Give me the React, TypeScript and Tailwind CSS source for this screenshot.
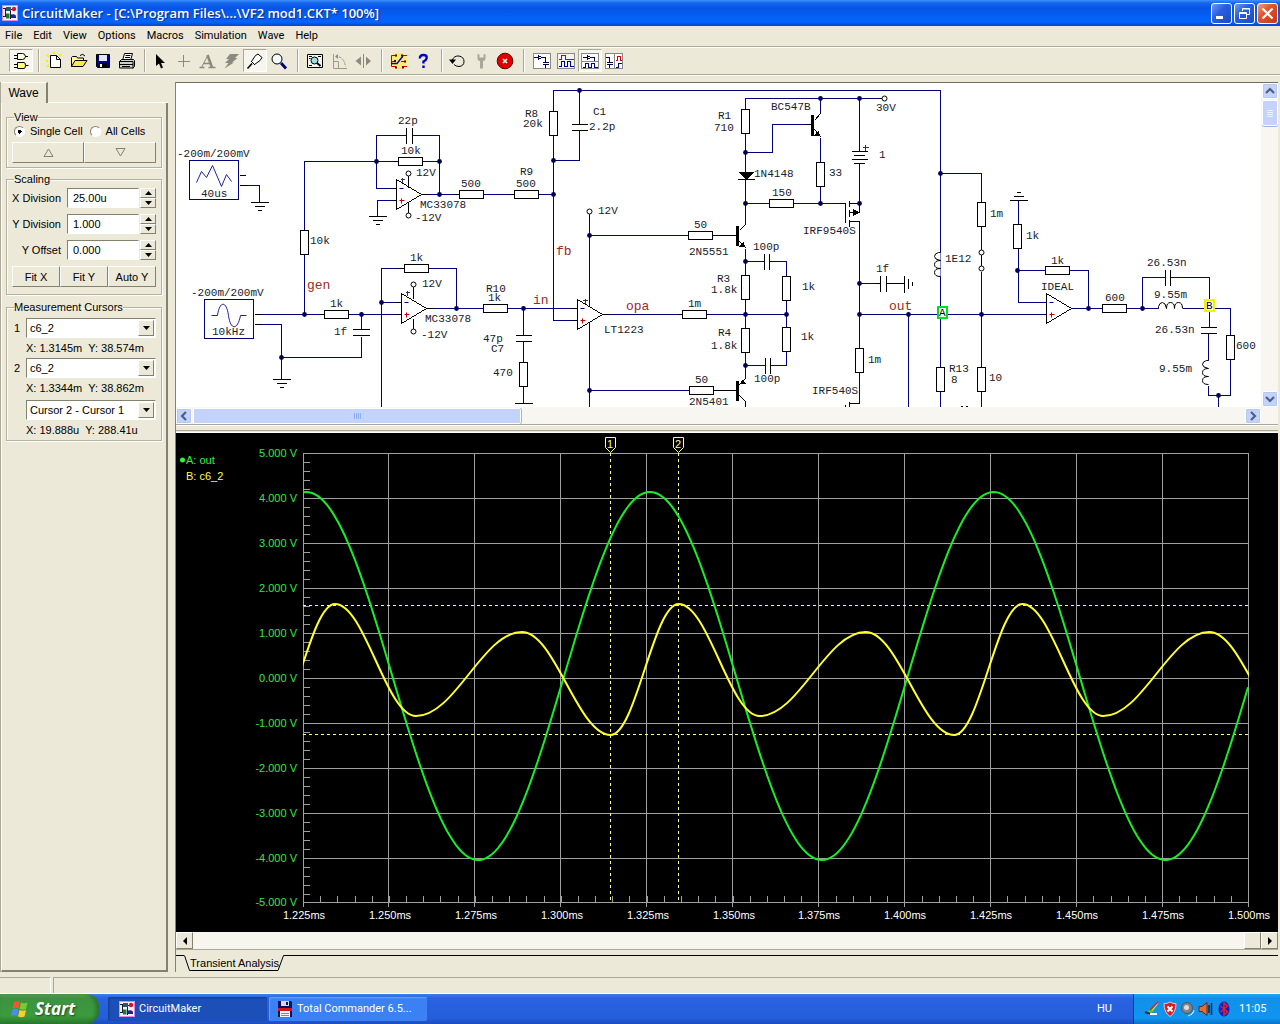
import React, { useState } from "react";
import { clsx } from "clsx";

/* ---------- shared styles ---------- */

const RAISED = "border border-t-white border-l-white border-r-[#85816f] border-b-[#85816f] bg-[#ece9d8]";
const SUNKEN = "border border-t-[#85816f] border-l-[#85816f] border-r-white border-b-white bg-white";

/* ---------- toolbar icons ---------- */

function Icon({ children, crisp }: { children: React.ReactNode; crisp?: boolean }) {
  return (
    <svg width="18" height="18" viewBox="0 0 18 18" fill="none" stroke="#000" strokeWidth="1" shapeRendering={crisp ? "crispEdges" : undefined} aria-hidden="true">
      {children}
    </svg>
  );
}

const icons: Record<string, React.ReactNode> = {
  gates: (
    <Icon>
      <path d="M5.500 1.500h5q2.500 0 3 3q-.5 3-3 3h-5zM2 3.500h3.500M2 6.500h3.500M13 4.500h3" fill="#ffffd8" />
      <path d="M5.500 10.500h6.500q1.500 0 1.500 3t-1.500 3H5.500zM2 12.500h3.500M2 15.500h3.500M13.500 13.500h3" fill="#ffff80" />
    </Icon>
  ),
  new: (
    <Icon>
      <path d="M1 3l2 2M8 0v2M15 2l-2 2M1 15l2-2M0 9h2" stroke="#f4f000" strokeWidth="2" />
      <path d="M4.500 3.500h6l4 4v8h-10z" fill="#fff" />
      <path d="M10.500 3.500v4h4" />
    </Icon>
  ),
  open: (
    <Icon>
      <path d="M1.500 14.500v-9l1-1h4l1 1.500h6v3" fill="#ffff90" />
      <path d="M1.500 14.500l3.500-6h12l-4 6z" fill="#f4e858" />
      <path d="M10 3.500q3-2.500 5 .5" />
    </Icon>
  ),
  save: (
    <Icon>
      <path d="M2.500 2.500h13v13h-12l-1-1z" fill="#000080" />
      <rect x="5" y="3" width="8" height="6" fill="#e6e6f2" stroke="none" />
      <rect x="5" y="11" width="8" height="4" fill="#000" stroke="none" />
      <rect x="6" y="12" width="2" height="3" fill="#fff" stroke="none" />
    </Icon>
  ),
  print: (
    <Icon>
      <path d="M4.500 8.500l2-7h8l-2 7" fill="#fff" />
      <path d="M7.500 3.500h5M7 5.500h5" />
      <path d="M1.500 9.500l2-2h12l1 1v6l-1.500 1.500h-13.500z" fill="#d0d0c8" />
      <path d="M1.500 9.500h13.500M1.500 12.500h13.500M15 9.500v7M4 14.500h8" />
    </Icon>
  ),
  arrow: (
    <Icon>
      <path d="M6 2v12l3-2.500 2 5 2-1-2-4.500h4z" fill="#000" stroke="none" />
    </Icon>
  ),
  plus: (
    <Icon crisp>
      <path d="M9.500 3v12M4 9.500h12" stroke="#8c8a80" />
    </Icon>
  ),
  text: (
    <Icon>
      <path d="M3.500 15.500L10 3" stroke="#8c8a80" />
      <path d="M9.500 3l4.500 12.500" stroke="#8c8a80" strokeWidth="2.600" />
      <path d="M5.500 11.500h6.500M1.500 15.500h5M10.500 15.500h7" stroke="#8c8a80" strokeWidth="1.400" />
    </Icon>
  ),
  bolt: (
    <Icon>
      <path d="M8 2h9l-4 4h2.500l-5.500 4.500h2L2.500 16.500l4-5.500H3l4-4H4z" fill="#8c8a80" stroke="none" />
    </Icon>
  ),
  probe: (
    <Icon>
      <path d="M1.500 16.500l4.500-5" strokeWidth="1.600" />
      <path d="M5.500 9.500l4-6 2.500-1.500 4 3.500-2 3-5.500 4z" fill="#fff" />
      <path d="M5 9l4 4" />
    </Icon>
  ),
  zoom: (
    <Icon>
      <circle cx="7" cy="7" r="5" fill="#f4fbfb" />
      <path d="M11 11l5 5.500" stroke="#000080" strokeWidth="2.800" />
    </Icon>
  ),
  preview: (
    <Icon>
      <path d="M1.500 2.500h15v13h-15z" fill="#f4f4ec" />
      <path d="M3 4.500h3M3 6.500h1.500M3 13.500h3M12 4.500h3" />
      <circle cx="8.500" cy="8.500" r="3.500" fill="#9be0e0" />
      <path d="M11 11l3.500 3" strokeWidth="2" />
    </Icon>
  ),
  rotate: (
    <Icon>
      <path d="M3.500 2v14.500H17M3.500 9.500h5v7" stroke="#9c9a8c" />
      <path d="M6 4.500q8 0 9.500 10" stroke="#8c8a80" strokeDasharray="2 1" />
      <path d="M8 2L5 4.500 8 7z" fill="#8c8a80" stroke="none" />
    </Icon>
  ),
  mirror: (
    <Icon>
      <path d="M9.500 2v14" stroke="#8c8a80" />
      <path d="M7 4.500v9L1.500 9zM12 4.500v9l5-4.500z" fill="#8c8a80" stroke="none" />
    </Icon>
  ),
  traces: (
    <Icon>
      <circle cx="9" cy="9" r="8.500" fill="#ffee30" opacity=".6" stroke="none" />
      <path d="M6 3.500H1.500v11H6M1.500 9.500H5M12 3.500h5M11 9.500h5M12 14.500h5" stroke="#c80000" />
      <path d="M1 11.500h6L13 4" stroke="#0000c0" strokeWidth="1.400" />
      <path d="M5 3.500h2M11 3.500h2M14 9.500h2M5 15.500h2M12 15.500h2M4 9h2" stroke="#400000" strokeWidth="2" />
    </Icon>
  ),
  help: (
    <Icon>
      <path d="M6 6.500q-.5-3.500 3.500-3.500t3 3.500Q12 8.500 9.500 9.500V11.500M9.500 13.500v2.500" stroke="#0000c8" strokeWidth="2.400" />
    </Icon>
  ),
  undo: (
    <Icon>
      <path d="M4 8.500Q6 3.500 11 4q5 1 5 5.500t-5 5Q8 14.500 6 12.500" />
      <path d="M1 7.500h7L4.500 12z" fill="#000" stroke="none" />
    </Icon>
  ),
  wrench: (
    <Icon>
      <path d="M5.500 2v4q0 3 2.500 3v7.500h3V9q2.500 0 2.500-3V2l-2 .5v3h-4v-3z" fill="#a9a79a" stroke="none" />
    </Icon>
  ),
  stop: (
    <Icon>
      <circle cx="9" cy="9" r="7.800" fill="#e00000" stroke="#600000" strokeWidth="1" />
      <path d="M7 7l4 4M11 7l-4 4" stroke="#fff" strokeWidth="1.600" />
    </Icon>
  ),
  schem: (
    <Icon crisp>
      <path d="M.5 1.500h17v15H.5z" fill="#fff" stroke="#888" />
      <path d="M1 5.500h4M5.500 3v5M6 4.500h2M6 6.500h2M8 5.500h4.500v5M10 10.500h6M10 12.500h6M12.500 13v3" stroke="#000050" />
    </Icon>
  ),
  waves: (
    <Icon crisp>
      <path d="M.5 1.500h17v15H.5z" fill="#f2f2ee" stroke="#888" />
      <path d="M2 7.500h2.500V3.500h4v4h8" stroke="#d00000" />
      <path d="M2 14.500h2.500v-5h3v5h3v-5h3v5h3" stroke="#0000a0" />
    </Icon>
  ),
  split: (
    <Icon crisp>
      <path d="M.5 1.500h17v15H.5zM.5 9.500h17" fill="#fff" stroke="#888" />
      <path d="M2 5.500h4M6.500 3v5M7 4.500h2M7 6.500h2M9 5.500h4.500v3" stroke="#000050" />
      <path d="M2 15.500h2.500v-4h3v4h3v-4h3v4h3" stroke="#0000a0" />
    </Icon>
  ),
  vsplit: (
    <Icon crisp>
      <path d="M.5 1.500h17v15H.5zM9.500 1.500v15" fill="#fff" stroke="#888" />
      <path d="M1 5.500h3.500v5M2 10.500h6M2 12.500h6M4.500 13v3" stroke="#000050" />
      <path d="M11 8.500h1.500V4.500h3v4H17" stroke="#d00000" />
      <path d="M11 15.500h2.500v-4h3" stroke="#0000a0" />
    </Icon>
  ),
};

type Tool = { id: string; label: string; pressed?: boolean };

const toolGroups: { cls: string; tools: Tool[] }[] = [
  { cls: "ml-[9px] mr-[5px]", tools: [{ id: "gates", label: "Parts browser", pressed: true }] },
  {
    cls: "ml-[3px] mr-[5px]",
    tools: [
      { id: "new", label: "New" },
      { id: "open", label: "Open" },
      { id: "save", label: "Save" },
      { id: "print", label: "Print" },
    ],
  },
  {
    cls: "ml-px mr-1.5",
    tools: [
      { id: "arrow", label: "Arrow tool" },
      { id: "plus", label: "Wire tool" },
      { id: "text", label: "Text tool" },
      { id: "bolt", label: "Delete tool" },
      { id: "probe", label: "Probe tool", pressed: true },
      { id: "zoom", label: "Zoom tool" },
    ],
  },
  {
    cls: "ml-1 mr-1.5",
    tools: [
      { id: "preview", label: "Zoom to fit" },
      { id: "rotate", label: "Rotate" },
      { id: "mirror", label: "Mirror" },
    ],
  },
  {
    cls: "ml-1 mr-1.5",
    tools: [
      { id: "traces", label: "Digital options" },
      { id: "help", label: "Help" },
    ],
  },
  {
    cls: "ml-0.5 mr-1.5",
    tools: [
      { id: "undo", label: "Reset" },
      { id: "wrench", label: "Step" },
      { id: "stop", label: "Stop simulation" },
    ],
  },
  {
    cls: "ml-[5px]",
    tools: [
      { id: "schem", label: "Schematic only" },
      { id: "waves", label: "Waveforms only" },
      { id: "split", label: "Split horizontally", pressed: true },
      { id: "vsplit", label: "Split vertically" },
    ],
  },
];

function Toolbar() {
  return (
    <div role="toolbar" className="flex h-7 items-center border-t border-[#aca899] shadow-[inset_0_1px_0_#fff,0_1px_0_#aca899,0_2px_0_#fff]">
      {toolGroups.map((g, i) => (
        <React.Fragment key={i}>
          {i > 0 && <div className="h-[23px] w-0.5 border-l border-r border-l-[#aca899] border-r-white" />}
          <div className={clsx("flex", g.cls)}>
            {g.tools.map((t) => (
              <button
                key={t.id}
                aria-label={t.label}
                className={clsx(
                  "flex h-[23px] w-6 items-center justify-center",
                  t.pressed && "border border-t-[#aca899] border-l-[#aca899] border-r-white border-b-white bg-[#f6f5ee]"
                )}
              >
                {icons[t.id]}
              </button>
            ))}
          </div>
        </React.Fragment>
      ))}
    </div>
  );
}

/* ---------- title bar and menu ---------- */

function AppLogo() {
  return (
    <svg width="16" height="16" viewBox="0 0 16 16" aria-hidden="true" className="shrink-0">
      <rect width="16" height="16" fill="#f8eef8" />
      <rect x=".5" y=".5" width="15" height="15" fill="none" stroke="#e088e0" />
      <path d="M1 3.500h4M1 11.500h3M3.500 3v9M9 4.500h4M9 12.500h5" stroke="#102030" />
      <rect x="4" y="2" width="5" height="4" fill="#285a68" />
      <circle cx="12" cy="4" r="2.200" fill="#d81030" />
      <path d="M4 8.500h3.500v5H4z" fill="#108030" />
      <path d="M9 9.500q4.500-1 5 1.500 0 2.500-5 2z" fill="#182890" />
      <path d="M8.500 6v8" stroke="#102030" />
    </svg>
  );
}

function TitleBar() {
  const btn = "flex h-[21px] w-[21px] items-center justify-center rounded-[3px] border border-white";
  return (
    <header className="flex h-[26px] items-center bg-[linear-gradient(#3c92fb_0,#1765ef_3px,#0455e4_8px,#0560f6_17px,#0464fc_22px,#0345cd_26px)] pr-0.5 pl-0.5">
      <AppLogo />
      <h1 className="ml-1 flex-1 truncate font-['Open_Sans','Noto_Sans',sans-serif] text-[13px] leading-4 font-semibold text-white [text-shadow:1px_1px_1px_#0a2a80]">
        CircuitMaker - [C:\Program Files\...\VF2 mod1.CKT* 100%]
      </h1>
      <div className="flex gap-0.5">
        <button aria-label="Minimize" className={clsx(btn, "bg-[linear-gradient(135deg,#6f9bf5,#2a5fe0_40%,#1c49c8)]")}>
          <svg width="15" height="15" viewBox="0 0 15 15"><path d="M2 10h7v3H2z" fill="#fff" /></svg>
        </button>
        <button aria-label="Restore" className={clsx(btn, "bg-[linear-gradient(135deg,#6f9bf5,#2a5fe0_40%,#1c49c8)]")}>
          <svg width="15" height="15" viewBox="0 0 15 15" fill="none" stroke="#fff">
            <path d="M5.500 5V2.500h7v6H10M5 3h8" /><path d="M2.500 6.500h7v6h-7zM2 7.500h8" />
          </svg>
        </button>
        <button aria-label="Close" className={clsx(btn, "bg-[linear-gradient(135deg,#f0a080,#e0542c_40%,#c43a14)]")}>
          <svg width="15" height="15" viewBox="0 0 15 15"><path d="M2.500 2.500l10 10M12.500 2.500l-10 10" stroke="#fff" strokeWidth="2.200" /></svg>
        </button>
      </div>
    </header>
  );
}

function MenuBar() {
  const items = ["File", "Edit", "View", "Options", "Macros", "Simulation", "Wave", "Help"];
  return (
    <nav className="flex h-5 items-center gap-[11px] pl-[5px] font-['Roboto',sans-serif] text-[11px] leading-4 text-black">
      {items.map((m) => (
        <button key={m}>{m}</button>
      ))}
    </nav>
  );
}

/* ---------- side panel ---------- */

function Group({ title, children, className }: { title: string; children: React.ReactNode; className?: string }) {
  return (
    <fieldset className={clsx("mx-1 min-w-0 border border-[#b5b19f] px-[5px] shadow-[inset_1px_1px_0_#fff,1px_1px_0_#fff]", className)}>
      <legend className="ml-0.5 h-3 leading-3">{title}</legend>
      {children}
    </fieldset>
  );
}

function ScaleField({ label, id, initial }: { label: string; id: string; initial: string }) {
  const [value, setValue] = useState(initial);
  const spin = clsx(RAISED, "flex h-2.5 w-full items-center justify-center");
  return (
    <div className="flex h-5 items-center">
      <label htmlFor={id} className="w-[55px] pr-1.5 text-right whitespace-nowrap">{label}</label>
      <input id={id} value={value} onChange={(e) => setValue(e.target.value)} className={clsx(SUNKEN, "h-5 w-[72px] min-w-0 px-[5px] outline-none")} />
      <div className="ml-px flex h-5 w-4 flex-col">
        <button aria-label={label + " up"} className={spin}>
          <svg width="7" height="4"><path d="M0 4L3.500 0 7 4z" /></svg>
        </button>
        <button aria-label={label + " down"} className={spin}>
          <svg width="7" height="4"><path d="M0 0L3.500 4 7 0z" /></svg>
        </button>
      </div>
    </div>
  );
}

function Combo({ label, id, options }: { label?: string; id: string; options: string[] }) {
  return (
    <div className="flex h-5 items-center">
      {label ? <label htmlFor={id} className="w-3.5 pl-0.5">{label}</label> : <span className="w-3.5" />}
      <div className="relative h-5 flex-1">
        <select id={id} aria-label={label ? undefined : "Difference"} className={clsx(SUNKEN, "h-5 w-full appearance-none pl-[3px] outline-none")}>
          {options.map((o) => (
            <option key={o}>{o}</option>
          ))}
        </select>
        <span className={clsx(RAISED, "pointer-events-none absolute top-0.5 right-0.5 flex h-4 w-4 items-center justify-center")}>
          <svg width="7" height="4"><path d="M0 0L3.500 4 7 0z" /></svg>
        </span>
      </div>
    </div>
  );
}

function SidePanel() {
  const push = clsx(RAISED, "h-[21px] flex-1");
  const radio = "h-[11px] w-[11px] appearance-none rounded-full border border-[#85816f] border-r-white border-b-white bg-white checked:bg-[radial-gradient(#000_0_2px,#fff_2px)]";
  return (
    <aside className="mt-2 flex w-[168px] shrink-0 flex-col border-l border-[#aca899] font-['Liberation_Sans',Arial,sans-serif] text-[11px] leading-[14px] text-black">
      <div role="tablist" className="flex h-[21px]">
        <button role="tab" aria-selected="true" className="w-[47px] border-t border-r-2 border-t-white border-r-[#85816f] text-[12px]">Wave</button>
        <div className="flex-1 border-b border-white" />
      </div>
      <div className="flex flex-1 flex-col border-r-2 border-b-2 border-l border-r-[#85816f] border-b-[#85816f] border-l-white pt-2">
        <Group title="View" className="h-[57px]">
          <div className="flex h-4 items-center">
            <label className="flex items-center gap-[5px] pl-0.5 whitespace-nowrap">
              <input type="radio" name="cells" defaultChecked className={radio} />
              Single Cell
            </label>
            <label className="ml-[7px] flex items-center gap-[5px] whitespace-nowrap">
              <input type="radio" name="cells" className={radio} />
              All Cells
            </label>
          </div>
          <div className="mt-[3px] flex">
            <button aria-label="Previous cell" className={clsx(push, "flex items-center justify-center")}>
              <svg width="11" height="9" fill="none" stroke="#85816f"><path d="M1 8.500L5.500 1 10 8.500z" /></svg>
            </button>
            <button aria-label="Next cell" className={clsx(push, "flex items-center justify-center")}>
              <svg width="11" height="9" fill="none" stroke="#85816f"><path d="M1 .5L5.500 8 10 .5z" /></svg>
            </button>
          </div>
        </Group>
        <Group title="Scaling" className="mt-[5px] h-[122px]">
          <div className="mt-[3px] flex flex-col gap-1.5">
            <ScaleField id="xdiv" label="X Division" initial="25.00u" />
            <ScaleField id="ydiv" label="Y Division" initial="1.000" />
            <ScaleField id="yoff" label="Y Offset" initial="0.000" />
          </div>
          <div className="mt-1.5 flex">
            <button className={push}>Fit X</button>
            <button className={push}>Fit Y</button>
            <button className={push}>Auto Y</button>
          </div>
        </Group>
        <Group title="Measurement Cursors" className="mt-1.5 h-[140px]">
          <div className="mt-[5px]">
            <Combo id="cur1" label="1" options={["c6_2", "out"]} />
            <p className="h-5 pl-3.5 leading-5 whitespace-pre">X: 1.3145m  Y: 38.574m</p>
            <Combo id="cur2" label="2" options={["c6_2", "out"]} />
            <p className="h-[22px] pl-3.5 leading-5 whitespace-pre">X: 1.3344m  Y: 38.862m</p>
            <Combo id="curd" options={["Cursor 2 - Cursor 1"]} />
            <p className="h-5 pl-3.5 leading-5 whitespace-pre">X: 19.888u  Y: 288.41u</p>
          </div>
        </Group>
      </div>
    </aside>
  );
}

/* ---------- schematic ---------- */

const wires = [
  "M246 185H259V202",
  "M304 314V161H398M422 161H439M376 188V135H406M412 135H439V194M376 188H390M390 200H377V216",
  "M421 194H459M483 194H514M538 194H553",
  "M260 314H324M348 314H401M261 324H281V379M281 357H361V336M361 314V329",
  "M381 407V268H404M428 268H456V308M381 302H401M426 308H483M507 308H571M523 308V335M523 341V403",
  "M571 320H553V90H940V407M579 90V124M579 130V160H553",
  "M589 214V306M589 235H688M589 322V407M589 390H689M602 314H786",
  "M745 203V98H878M745 152H772V124H805M820 98V112M820 137V203M859 98V151M859 163V203",
  "M745 203V224M745 203H840M745 248V377M745 261H764M769 261H786V365H770M745 365H765",
  "M859 221V403M859 283H874M859 314H1046M908 314V407",
  "M940 173H981V249M981 271V407M1018 200V302H1046M1017 270H1088V308M1071 308H1158M1182 308H1230V395H1208V385M1218 395V407",
  "M1142 308V277H1165M1170 277H1209V327M1208 333V360",
];

const leads = [
  "M239 175h6M239 185h7M254 314h6M254 324h7M390 188h6M390 200h6M395 314h6M395 302h6M393 161h5M453 194h5M508 194h5M318 314h5M397 268h6M421 194h6M426 308h6M571 308h6M571 320h6M602 314h6M676 314h5",
  "M250 202h18M254 206h10M257 210h4M368 216h18M372 220h10M375 224h4M272 379h18M276 383h10M279 387h4M514 403h18",
  "M1009 200h18M1013 196h10M1016 192h4M904 275v17M908 278v10M912 281v4",
  "M406 127v16M412 127v16M352 329h17M352 335h17M515 335h16M515 341h16M571 124h16M571 130h16M764 253v16M769 253v16M765 357v16M770 357v16M880 275v16M886 275v16M886 283h18M874 283h6M1165 269v16M1170 269v16M1200 327h16M1200 333h16",
  "M851 151h16M853 155h11M851 159h16M853 163h11M859 147v4M878 98h4",
  "M712 235h24M713 390h23M805 124h6M739 230L745 224M739 241L745 247M814 120L820 113M814 129L820 136M739 384L745 378M739 395L745 401V407",
  "M737 179h17M838 203h7v19M849 200v6M849 209v7M849 219v7M849 203h10v9h-10M849 221h10M849 401v6M849 403h10M845 404v3",
  "M408 175v12M408 201v12M413 286v12M413 318v11M589 213v5M981 254v12",
  "M396 179V209L421 194ZM401 293V323L426 308ZM577 299V329L602 314ZM1046 293V323L1071 308Z",
  "M960 406h2M965 406h2",
];

const hRes = [[410, 161], [471, 194], [526, 194], [336, 314], [416, 268], [495, 308], [700, 235], [701, 390], [694, 314], [781, 203], [1057, 270], [1114, 308]];
const vRes = [[304, 242], [553, 123], [523, 374], [745, 121], [820, 174], [745, 287], [786, 288], [786, 339], [745, 340], [859, 360], [940, 379], [981, 214], [981, 379], [1017, 236], [1230, 347]];
const dots = [[376, 161], [439, 161], [439, 194], [304, 314], [361, 314], [281, 357], [381, 302], [456, 308], [523, 308], [553, 160], [553, 194], [579, 90], [589, 235], [589, 390], [745, 152], [745, 203], [745, 261], [745, 314], [745, 365], [786, 314], [820, 98], [820, 203], [859, 98], [859, 203], [859, 283], [859, 314], [908, 314], [940, 173], [981, 314], [1017, 270], [1088, 308], [1142, 308], [1218, 395]];
const pins = [[408, 173], [408, 215], [413, 284], [413, 331], [589, 211], [884, 98], [981, 252], [981, 268]];

const labels: [number, number, string][] = [
  [177, 157, "-200m/200mV"], [201, 197, "40us"], [398, 124, "22p"], [401, 154, "10k"], [416, 176, "12V"], [420, 208, "MC33078"], [415, 221, "-12V"],
  [310, 244, "10k"], [191, 296, "-200m/200mV"], [212, 335, "10kHz"], [330, 307, "1k"], [334, 335, "1f"], [410, 261, "1k"], [422, 287, "12V"],
  [425, 322, "MC33078"], [421, 338, "-12V"], [461, 187, "500"], [520, 175, "R9"], [516, 187, "500"], [486, 292, "R10"], [488, 301, "1k"],
  [483, 342, "47p"], [491, 352, "C7"], [493, 376, "470"], [525, 117, "R8"], [523, 127, "20k"], [593, 115, "C1"], [589, 130, "2.2p"], [598, 214, "12V"],
  [604, 333, "LT1223"], [694, 228, "50"], [689, 255, "2N5551"], [695, 383, "50"], [689, 405, "2N5401"], [688, 307, "1m"], [718, 119, "R1"], [714, 131, "710"],
  [771, 110, "BC547B"], [876, 111, "30V"], [829, 176, "33"], [754, 177, "1N4148"], [772, 196, "150"], [879, 158, "1"], [803, 234, "IRF9540S"],
  [753, 250, "100p"], [717, 282, "R3"], [711, 293, "1.8k"], [802, 290, "1k"], [801, 340, "1k"], [718, 336, "R4"], [711, 349, "1.8k"], [754, 382, "100p"],
  [876, 272, "1f"], [868, 363, "1m"], [812, 394, "IRF540S"], [945, 262, "1E12"], [990, 217, "1m"], [949, 372, "R13"], [951, 383, "8"], [989, 381, "10"],
  [1026, 239, "1k"], [1051, 264, "1k"], [1041, 290, "IDEAL"], [1105, 301, "600"], [1147, 266, "26.53n"], [1154, 298, "9.55m"], [1155, 333, "26.53n"],
  [1159, 372, "9.55m"], [1236, 349, "600"],
];

const nets: [number, number, string][] = [[307, 289, "gen"], [533, 304, "in"], [556, 255, "fb"], [626, 310, "opa"], [889, 310, "out"]];
const plusMinus = [[401, 188, 200], [406, 302, 314], [582, 308, 320], [1051, 302, 314]];

function Schematic() {
  return (
    <svg width="1085" height="324" viewBox="176 83 1085 324" className="block shrink-0" role="img" aria-label="Circuit schematic">
      <g transform="translate(.5 .5)" fill="none" shapeRendering="crispEdges">
        <path d={wires.join("")} stroke="#000080" />
        <path d="M189 160h49v39h-49zM204 299h49v39h-49z" stroke="#000080" />
        <path d={leads.join("")} stroke="#000" fill="none" />
        {hRes.map(([x, y]) => <rect key={x + "-" + y} x={x - 12} y={y - 4} width="24" height="8" fill="#fff" stroke="#000" />)}
        {vRes.map(([x, y]) => <rect key={x + "-" + y} x={x - 4} y={y - 12} width="8" height="24" fill="#fff" stroke="#000" />)}
        <path d="M737 225v20M737 380v20M812 114v21" stroke="#000" strokeWidth="3" />
        <path d="M737 171h17l-8 8zM745 247l-6-1 4-5zM820 136l-6-1 4-5zM739 384l6-1-3-4zM859 212l-7-4v8z" fill="#000" />
        <path d="M404 179h-4M402 177v5M409 292h-4M407 290v5M587 300h-5M585 298v5M868 147h-6M865 144v6" stroke="#303060" />
      </g>
      <g transform="translate(.5 .5)" fill="none" stroke="#000">
        <path d="M196 182L201 171 206 177 212 165 221 186 226 174 231 181M211 315h6C219 300 226 300 228 315S237 330 240 315H246" stroke="#2020a0" />
        <path d="M940 252h-2q-4 1-4 4t6 4q-6 0-6 4t6 4q-6 0-6 4t6 4" fill="#fff" />
        <path d="M1208 360h-2q-4 1-4 4t6 4q-6 0-6 4t6 4q-6 0-6 4t6 4" fill="#fff" />
        <path d="M1158 308v-2q1-4 4-4t4 6q0-6 4-6t4 6q0-6 4-6t4 6" fill="#fff" />
        {dots.map(([x, y]) => <circle key={x + "-" + y} cx={x} cy={y} r="2.400" fill="#000050" stroke="none" />)}
        {pins.map(([x, y]) => <circle key={x + "-" + y} cx={x} cy={y} r="2.500" fill="#fff" />)}
        {plusMinus.map(([x, m, p]) => (
          <g key={x}>
            <path d={`M${x - 2} ${m}h4`} stroke="#000080" />
            <path d={`M${x - 2} ${p}h5M${x} ${p - 2}v5`} stroke="#c00000" />
          </g>
        ))}
      </g>
      <g fontFamily="'Liberation Mono','Courier New',monospace" fontSize="11" fill="#202028">
        {labels.map(([x, y, t], i) => <text key={i} x={x} y={y}>{t}</text>)}
      </g>
      <g fontFamily="'Liberation Mono','Courier New',monospace" fontSize="13" fill="#a02828">
        {nets.map(([x, y, t]) => <text key={t} x={x} y={y}>{t}</text>)}
      </g>
      <g fontFamily="'Liberation Mono','Courier New',monospace" fontSize="11" fill="#000">
        <rect x="938" y="307" width="9" height="11" fill="#fff" stroke="#00e020" strokeWidth="2" />
        <text x="939" y="316">A</text>
        <rect x="1205" y="300" width="9" height="11" fill="#fff" stroke="#f4f000" strokeWidth="2" />
        <text x="1206" y="309">B</text>
      </g>
    </svg>
  );
}

/* ---------- scroll bar parts ---------- */

function XpArrow({ dir, label }: { dir: "left" | "right" | "up" | "down"; label: string }) {
  const d = { left: "M7 1L3 5l4 4", right: "M3 1l4 4-4 4", up: "M1 7l4-4 4 4", down: "M1 3l4 4 4-4" }[dir];
  return (
    <button aria-label={label} className="flex h-4 w-4 shrink-0 items-center justify-center rounded-[2px] border border-white bg-[#c3d3fb] shadow-[inset_0_0_0_1px_#b4c8f6]">
      <svg width="10" height="10" viewBox="0 0 10 10" fill="none" stroke="#4d6185" strokeWidth="2.200"><path d={d} /></svg>
    </button>
  );
}

function SchematicPane() {
  return (
    <section className="flex flex-col border-t border-t-[#716f64] border-b border-b-[#aca899] bg-white">
      <div className="flex h-[324px]">
        <div className="min-w-0 flex-1 overflow-hidden"><Schematic /></div>
        <div className="flex w-[17px] flex-col items-center bg-[#f7f6f1]">
          <XpArrow dir="up" label="Scroll up" />
          <div className="mt-px flex h-[26px] w-4 flex-col items-center justify-center gap-px rounded-[2px] border border-white bg-[#c3d3fb] shadow-[0_1px_0_#9db5ea]">
            {[0, 1, 2, 3].map((i) => <span key={i} className="h-px w-1.5 bg-[#eef4fe]" />)}
          </div>
          <div className="flex-1" />
          <XpArrow dir="down" label="Scroll down" />
        </div>
      </div>
      <div className="flex h-[17px] items-center bg-[#f7f6f1] pr-[17px]">
        <XpArrow dir="left" label="Scroll left" />
        <div className="ml-px flex h-4 w-[328px] items-center justify-center gap-px rounded-[2px] border border-white bg-[#c3d3fb] shadow-[1px_0_0_#9db5ea]">
          {[0, 1, 2, 3].map((i) => <span key={i} className="h-1.5 w-px bg-[#8cb0f8]" />)}
        </div>
        <div className="flex-1" />
        <XpArrow dir="right" label="Scroll right" />
      </div>
    </section>
  );
}

/* ---------- waveform plot ---------- */

const X0 = 303.5;
const XSTEP = 945 / 11;
const PERIOD = XSTEP * 4;

const greenPath = (() => {
  const pts: string[] = [];
  for (let x = 303; x <= 1248; x += 3) {
    pts.push(`${x} ${(676 - 184 * Math.cos((2 * Math.PI * (x - 650)) / PERIOD)).toFixed(1)}`);
  }
  return "M" + pts.join("L");
})();

const yellowPath = (() => {
  const cycle = [[0, 735], [68, 604], [149, 716], [255, 632], [PERIOD, 735]];
  let d = "M267 735";
  for (let k = 0; k < 3; k++) {
    for (let i = 1; i < cycle.length; i++) {
      const [ax, ay] = cycle[i - 1];
      const [bx, by] = cycle[i];
      const o = 267 + k * PERIOD;
      const c = (bx - ax) * 0.37;
      d += `C${o + ax + c} ${ay} ${o + bx - c} ${by} ${o + bx} ${by}`;
    }
  }
  return d;
})();

function Plot() {
  const volts = [5, 4, 3, 2, 1, 0, -1, -2, -3, -4, -5];
  const range = (n: number) => Array.from({ length: n }, (_, i) => i);
  const rowY = (i: number) => 453 + Math.min(i * 45, 449);
  const grid =
    range(12).map((i) => `M${Math.floor(X0 + i * XSTEP - 0.5) + 0.5} 453V907`).join("") +
    range(11).map((i) => `M303 ${rowY(i) + 0.5}H1248`).join("") +
    range(50).map((i) => `M303 ${453 + i * 9 + 0.5}h7`).join("") +
    range(55).map((i) => `M${Math.round(X0 + (i * XSTEP) / 5 - 0.5) + 0.5} 902v-6`).join("");
  return (
    <svg viewBox="176 433 1102 499" className="block w-full bg-black" role="img" aria-label="Transient analysis waveforms">
      <defs><clipPath id="area"><rect x="303" y="453" width="946" height="450" /></clipPath></defs>
      <path d={grid} stroke="#a0a0a0" fill="none" shapeRendering="crispEdges" />
      <g stroke="#ffff90" strokeDasharray="3 3" shapeRendering="crispEdges">
        <path d="M303 605.500H1248M303 734.500H1248M610.500 453V903M678.500 453V903" />
      </g>
      <g clipPath="url(#area)" fill="none" strokeWidth="2">
        <path d={greenPath} stroke="#18ee28" />
        <path d={yellowPath} stroke="#ffff30" />
      </g>
      <g fill="#000" stroke="#ffff90">
        <path d="M605.500 437.500h10v10l-5 5-5-5zM673.500 437.500h10v10l-5 5-5-5z" />
      </g>
      <g fontFamily="'Liberation Sans',Arial,sans-serif" fontSize="11">
        <g fill="#ffff90" textAnchor="middle">
          <text x="610" y="448">1</text>
          <text x="678" y="448">2</text>
        </g>
        <circle cx="182.500" cy="460" r="2.500" fill="#30f040" />
        <text x="186" y="464" fill="#30f040">A: out</text>
        <text x="186" y="480" fill="#ffff40">B: c6_2</text>
        <g fill="#30e840" textAnchor="end">
          {volts.map((v, i) => <text key={v} x="297" y={rowY(i) + 4}>{v.toFixed(3)} V</text>)}
        </g>
        <g fill="#fff" textAnchor="middle">
          {range(12).map((i) => <text key={i} x={Math.floor(X0 + 1 + i * XSTEP)} y="919">{(1.225 + i * 0.025).toFixed(3)}ms</text>)}
        </g>
      </g>
    </svg>
  );
}

function WavePane() {
  const arrow = clsx(RAISED, "flex h-[17px] w-[17px] items-center justify-center");
  return (
    <section className="flex flex-1 flex-col font-['Liberation_Sans',Arial,sans-serif] text-[11px] text-black">
      <Plot />
      <div className="flex h-[17px] bg-[#f6f5ee]">
        <button aria-label="Scroll left" className={arrow}><svg width="4" height="8"><path d="M4 0v8L0 4z" /></svg></button>
        <div className="flex-1" />
        <div className={clsx(RAISED, "h-[17px] w-[17px]")} />
        <button aria-label="Scroll right" className={arrow}><svg width="4" height="8"><path d="M0 0v8l4-4z" /></svg></button>
      </div>
      <div className="h-1.5 border-t border-[#aca899]" />
      <div className="flex h-[17px]">
        <div className="w-2 border-t border-black" />
        <button className="relative h-4 w-[101px] text-center leading-4 whitespace-nowrap">
          <svg viewBox="0 0 101 17" className="absolute inset-0 h-[17px] w-full" fill="none" stroke="#000">
            <path d="M.5 .5L5.500 15.500H94L99.500 .5H101" />
          </svg>
          Transient Analysis
        </button>
        <div className="flex-1 border-t border-black" />
      </div>
    </section>
  );
}

/* ---------- task bar ---------- */

function Taskbar() {
  return (
    <footer className="flex h-[30px] items-stretch bg-[linear-gradient(#3a80f0_0,#2a62e0_4px,#245edb_24px,#1c4cc0_30px)] font-['Roboto',sans-serif] text-[11px] text-white">
      <button className="flex w-[99px] items-center gap-1.5 rounded-r-xl bg-[linear-gradient(#62b05f_0,#3c9340_4px,#3b9a3e_22px,#2a7a2d_30px)] pl-[11px] shadow-[inset_-3px_0_4px_#2a7030]">
        <svg width="18" height="18" viewBox="0 0 18 18" aria-hidden="true">
          <path d="M3 2q3-1.500 6 0L7.500 8.500q-3-1.500-6 0z" fill="#f0582c" />
          <path d="M10 2.500q3 1.500 6.500 0L15 9q-3 1.500-6.500 0z" fill="#7cc832" />
          <path d="M1.500 9.500q3-1.500 6 0L6 16q-3-1.500-6 0z" fill="#4a8cf0" />
          <path d="M8.500 10q3 1.500 6.500 0l-1.500 6.500q-3 1.500-6.500 0z" fill="#fccc30" />
        </svg>
        <span className="font-['Open_Sans',sans-serif] text-[17px] leading-5 font-bold italic [text-shadow:1px_1px_2px_#1a4a1a]">Start</span>
      </button>
      <div className="flex flex-1 items-center gap-0.5 pl-[9px]">
        <button className="flex h-6 w-[159px] items-center gap-1 rounded-[2px] bg-[#1c50b8] pl-[11px] shadow-[inset_1px_1px_2px_#123a90]">
          <AppLogo /> CircuitMaker
        </button>
        <button className="flex h-6 w-[158px] items-center gap-1 rounded-[2px] bg-[#3c81f3] pl-2 shadow-[inset_1px_1px_1px_#68a0fa]">
          <svg width="16" height="16" viewBox="0 0 16 16" aria-hidden="true">
            <path d="M1 0h13l1 1v15H1z" fill="#101060" />
            <path d="M4 0h8v5H4z" fill="#d8d8e8" /><path d="M9 1h2v3H9z" fill="#101060" />
            <path d="M3 8h10v8H3z" fill="#f4f4f4" /><path d="M1 7h14v3H1z" fill="#d01818" /><path d="M4 12.500h8M4 14.500h8" stroke="#888" />
          </svg>
          Total Commander 6.5...
        </button>
      </div>
      <span className="flex w-7 items-center">HU</span>
      <div className="ml-2 flex w-[147px] items-center border-l border-[#0c3aa0] bg-[linear-gradient(#1ca8f4_0,#1290e8_4px,#0f96f0_24px,#0c70c8_30px)] pl-2.5">
        <div className="flex gap-0.5">
          <svg width="16" height="16" viewBox="0 0 16 16"><path d="M1 12q3-3 5-3l8-7-5 9-3 2z" fill="#40c848" /><path d="M6 9l8-8" stroke="#e02020" strokeWidth="1.500" /><path d="M8 9.500l6-7" stroke="#f8e020" /><path d="M4 13h9" stroke="#fff" strokeWidth="2" /><path d="M1 11l5 2" stroke="#202060" strokeWidth="2" /></svg>
          <svg width="16" height="16" viewBox="0 0 16 16"><path d="M8 1q3 2 6 1.500 0 9-6 13-6-4-6-13Q5 3 8 1z" fill="#d02028" stroke="#f0c0c0" /><path d="M5.500 5.500l5 5M10.500 5.500l-5 5" stroke="#fff" strokeWidth="2" /></svg>
          <svg width="16" height="16" viewBox="0 0 16 16"><circle cx="7" cy="7" r="5.500" fill="#808488" stroke="#505458" /><circle cx="6.500" cy="6.500" r="2.500" fill="#d8dce0" /><path d="M11 14q3-2 3-5M8 15q4-1 5-4" stroke="#d0e8ff" fill="none" /></svg>
          <svg width="16" height="16" viewBox="0 0 16 16"><path d="M1 5.500h3L9 1.500v13l-5-4H1z" fill="#e07030" stroke="#702010" /><path d="M11 4v8M13.500 2v12" stroke="#102050" strokeWidth="1.500" /></svg>
          <svg width="16" height="16" viewBox="0 0 16 16"><ellipse cx="8" cy="8" rx="5.500" ry="7.500" fill="#1020b8" /><path d="M4.500 5l7 6L8 14V2l3.500 3-7 6" stroke="#e02030" strokeWidth="1.500" fill="none" /></svg>
        </div>
        <time className="ml-[7px]">11:05</time>
      </div>
    </footer>
  );
}

export default function App() {
  return (
    <div className="flex min-h-screen flex-col overflow-x-hidden bg-[#ece9d8]">
      <TitleBar />
      <MenuBar />
      <Toolbar />
      <main className="flex flex-1">
        <SidePanel />
        <div className="mt-2 ml-[7px] mr-0.5 flex min-w-0 flex-1 flex-col border-l border-[#85816f]">
          <SchematicPane />
          <div className="mb-px h-1.5 border-t border-b border-t-white border-b-[#aca899]" />
          <div className="h-px bg-white" />
          <WavePane />
        </div>
      </main>
      <div className="mt-[5px] flex h-[17px] gap-0.5 border-b border-white" role="status">
        <div className="w-[51px] border-t border-r border-t-[#aca899] border-r-white" />
        <div className="flex-1 border-t border-l border-[#aca899]" />
      </div>
      <Taskbar />
    </div>
  );
}
